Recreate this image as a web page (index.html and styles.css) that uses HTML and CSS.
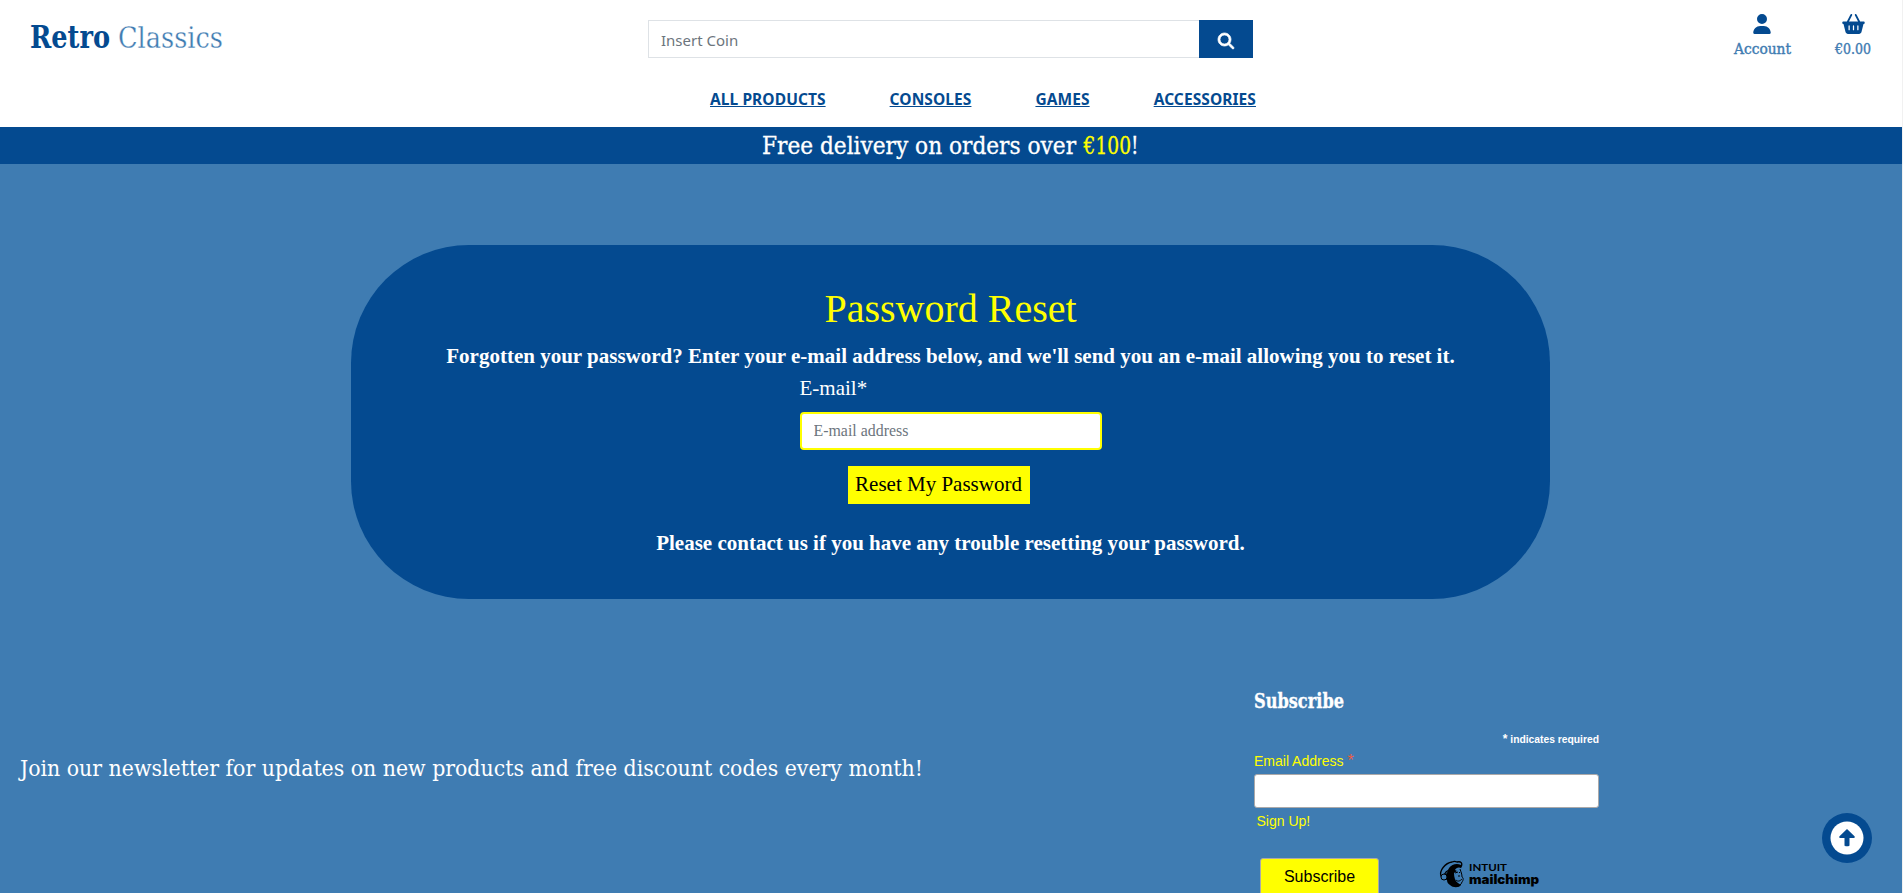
FILE: index.html
```html
<!DOCTYPE html>
<html lang="en">
<head>
<meta charset="utf-8">
<title>Retro Classics</title>
<link rel="stylesheet" href="styles.css">
</head>
<body>
<header class="header">
  <div class="top">
    <a class="logo slab"><svg width="200" height="40"><text class="logo-a" x="0" y="29" textLength="80" lengthAdjust="spacingAndGlyphs">Retro</text><text class="logo-b" x="88" y="29" textLength="105" lengthAdjust="spacingAndGlyphs">Classics</text></svg></a>
    <form class="search">
      <input class="search-input" type="text" placeholder="Insert Coin">
      <button class="search-btn" type="button" aria-label="Search"><svg width="16" height="16" viewBox="0 0 512 512" fill="#fff" stroke="#fff" stroke-width="24"><path d="M416 208c0 45.900-14.900 88.300-40 122.700L502.600 457.400c12.500 12.500 12.500 32.800 0 45.300s-32.800 12.500-45.300 0L330.700 376c-34.400 25.200-76.800 40-122.700 40C93.100 416 0 322.900 0 208S93.100 0 208 0S416 93.100 416 208zM208 352a144 144 0 1 0 0-288 144 144 0 1 0 0 288z"/></svg></button>
    </form>
    <div class="tools">
      <a class="tool"><svg width="18" height="20" viewBox="0 0 448 512"><path d="M224 256A128 128 0 1 0 224 0a128 128 0 1 0 0 256zm-45.700 48C79.800 304 0 383.800 0 482.300C0 498.700 13.300 512 29.700 512H418.300c16.400 0 29.700-13.300 29.700-29.700C448 383.800 368.200 304 269.700 304H178.300z"/></svg>
        <svg class="slab" width="58" height="20"><text x="1" y="15" textLength="57" lengthAdjust="spacingAndGlyphs">Account</text></svg></a>
      <a class="tool"><svg width="23" height="20" viewBox="0 0 576 512"><path d="M253.300 35.100c6.100-11.800 1.500-26.300-10.200-32.400s-26.300-1.500-32.400 10.200L117.600 192H32c-17.700 0-32 14.300-32 32s14.300 32 32 32L83.900 463.500C91 492 116.600 512 146 512H430c29.400 0 55-20 62.100-48.500L544 256c17.700 0 32-14.300 32-32s-14.300-32-32-32H458.400L365.300 12.900C359.200 1.200 344.700-3.400 332.900 2.700s-16.300 20.600-10.200 32.400L404.300 192H171.700L253.300 35.100zM192 304v96c0 8.800-7.200 16-16 16s-16-7.200-16-16V304c0-8.800 7.200-16 16-16s16 7.200 16 16zm96-16c8.800 0 16 7.200 16 16v96c0 8.800-7.200 16-16 16s-16-7.200-16-16V304c0-8.800 7.200-16 16-16zm128 16v96c0 8.800-7.200 16-16 16s-16-7.200-16-16V304c0-8.800 7.200-16 16-16s16 7.200 16 16z"/></svg>
        <svg class="slab" width="36" height="20"><text x="0" y="15" textLength="36" lengthAdjust="spacingAndGlyphs">€0.00</text></svg></a>
    </div>
  </div>
  <nav class="nav"><a>ALL PRODUCTS</a><a>CONSOLES</a><a>GAMES</a><a>ACCESSORIES</a></nav>
</header>
<div class="banner slab"><svg width="378" height="36"><text x="0" y="27" textLength="314" lengthAdjust="spacingAndGlyphs">Free delivery on orders over</text><text x="321.500" y="27" textLength="55" lengthAdjust="spacingAndGlyphs"><tspan class="price">€100</tspan>!</text></svg></div>
<main class="main">
  <section class="card">
    <h1 class="title">Password Reset</h1>
    <p class="lead">Forgotten your password? Enter your e-mail address below, and we'll send you an e-mail allowing you to reset it.</p>
    <form class="reset">
      <label class="label" for="email">E-mail*</label>
      <input class="email" id="email" type="email" placeholder="E-mail address">
      <button class="reset-btn" type="button">Reset My Password</button>
    </form>
    <p class="lead">Please contact us if you have any trouble resetting your password.</p>
  </section>
</main>
<footer class="footer">
  <p class="join slab"><svg width="904" height="34"><text x="0" y="24" textLength="903" lengthAdjust="spacingAndGlyphs">Join our newsletter for updates on new products and free discount codes every month!</text></svg></p>
  <form class="subscribe">
    <h2 class="sub-title slab"><svg width="92" height="28"><text x="0" y="21" textLength="90" lengthAdjust="spacingAndGlyphs">Subscribe</text></svg></h2>
    <div class="required"><span class="required-star">*</span> indicates required</div>
    <label class="sub-label" for="mc">Email Address <span class="star">*</span></label>
    <input class="sub-input" id="mc" type="email">
    <span class="signup">Sign Up!</span>
    <div class="sub-row">
      <button class="sub-btn" type="button">Subscribe</button>
      <svg class="chimp" width="102" height="30" viewBox="0 0 102 30">
        <path d="M2 16C0 11 6 3 13 2c2-1 3-1 5 0 4-1 6 1 4 5-5-2-9-1-12 3-3 1-4 3-5 5z" fill="none" stroke="#000" stroke-width="1.300"/>
        <path d="M10 8c3-4 8-5 12-3v3c-3-1-5 0-6 2l2 1-3 2c0 4 1 8 4 10l3 2c-2 3-8 3-11 0-2-1-3-3-3-5-3-1-3-4-1-6 2-2 2-4 3-6z"/>
        <path d="M16 13l3-1M20 12l1 1M21 9c1 3 2 5 2 8 2 1 1 4 0 5-1 3-3 4-5 4M17 20c2 2 4 1 6-1M20 15v2" fill="none" stroke="#000" stroke-width="1"/>
        <circle cx="5" cy="17" r="3" fill="#3f7cb2" stroke="#000"/>
        <text class="intuit" x="30" y="11" textLength="38" lengthAdjust="spacingAndGlyphs">INTUIT</text>
        <text class="mailchimp" x="30" y="24" textLength="70" lengthAdjust="spacingAndGlyphs">mailchimp</text>
      </svg>
    </div>
  </form>
</footer>
<a class="to-top" aria-label="Back to top"><svg width="34" height="34" viewBox="0 0 34 34"><circle cx="17" cy="17" r="16.500" fill="#fff"/><path d="M17 8l7.500 7.300c.8.900.2 1.700-.8 1.700h-4.200v7c0 .8-.5 1.200-1.200 1.200h-2.600c-.7 0-1.200-.4-1.200-1.200v-7h-4.200c-1 0-1.600-.8-.8-1.700z" fill="#044a90"/></svg></a>
<div class="edge"></div>
</body>
</html>
```
FILE: styles.css
```css
* { box-sizing: border-box; }
body { margin: 0; height: 893px; overflow: hidden; background: #3f7cb2; font-family: "Liberation Serif", serif; }
svg { display: block; overflow: visible; }
h1, h2, p { margin: 0; font-weight: 400; }
.slab { font-family: "DejaVu Serif Condensed", "DejaVu Serif", serif; }

.header { height: 127px; background: #fff; }
.top { display: grid; grid-template-columns: 648px 605px 1fr; height: 78px; align-items: start; }
.logo { padding: 19px 0 0 30px; }
.logo-a { font-size: 31px; font-weight: 700; fill: #044a90; }
.logo-b { font-size: 30px; fill: #3f7cb2; stroke: #fff; stroke-width: .3px; }
.search { display: flex; margin-top: 20px; }
.search-input { width: 551px; height: 38px; padding: 2px 12px 0; border: 1px solid #dee2e6; border-right: 0; font: 15px "Noto Sans", sans-serif; outline: none; }
.search-input::placeholder, .email::placeholder { color: #6c757d; opacity: 1; }
.search-btn { display: flex; flex: 1; align-items: center; justify-content: center; padding: 3px 0 0; border: 0; background: #044a90; }
.tools { display: flex; justify-content: flex-end; gap: 44px; padding: 14px 32px 0 0; }
.tool { display: flex; flex-direction: column; align-items: center; gap: 5px; fill: #044a90; }
.tool .slab { fill: #3f7cb2; stroke: #3f7cb2; stroke-width: .4px; font-size: 15px; }
.nav { display: flex; gap: 64px; padding: 9px 0 0 710px; font: 700 15.5px/24px "Noto Sans", sans-serif; color: #044a90; }
.nav a { text-decoration: underline; letter-spacing: .08px; }
.banner { display: flex; justify-content: center; height: 37px; padding-right: 2px; background: #044a90; font-size: 24px; fill: #fff; stroke: #fff; stroke-width: .3px; }
.price { fill: #ff0; stroke: #ff0; }

.main { display: flex; justify-content: center; padding: 81px 2px 0 0; }
.card { width: 1199px; height: 354px; padding-top: 40px; border-radius: 118px; background: #044a90; color: #fff; text-align: center; }
.title { font-size: 40px; line-height: 48px; color: #ff0; }
.lead { margin-top: 11px; font-size: 21px; font-weight: 700; line-height: 24px; }
.reset { display: flex; flex-direction: column; align-items: flex-start; width: 302px; margin: 5px auto 27px; }
.label { font-size: 21px; line-height: 30px; }
.email { width: 302px; height: 38px; margin: 9px 0 16px; padding: 0 12px; border: 2px solid #ff0; border-radius: 4px; font: 15.9px "Liberation Serif", serif; outline: none; }
.reset-btn { width: 182px; height: 38px; margin-left: 48px; padding: 0 0 2px; border: 0; background: #ff0; color: #000; font: 21px "Liberation Serif", serif; white-space: nowrap; }

.footer { display: grid; grid-template-columns: 1254px 345px; height: 294px; font-family: "Liberation Sans", sans-serif; }
.join { padding: 153px 0 0 20px; font-size: 23px; fill: #fff; }
.subscribe { display: flex; flex-direction: column; padding-top: 88px; color: #ff0; font-size: 14px; }
.sub-title { font-size: 20px; font-weight: 700; fill: #fff; stroke: #fff; stroke-width: .3px; }
.required { margin-top: 18px; text-align: right; color: #fff; font-size: 10.3px; font-weight: 700; line-height: 13px; }
.required-star { font-size: 12px; line-height: 1; }
.sub-label { margin-top: 7px; line-height: 17px; }
.star { color: #e85c41; font-size: 16px; line-height: 1; }
.sub-input { height: 34px; margin-top: 4px; border: 1px solid #aba9a9; border-radius: 3px; }
.signup { margin: 5px 0 0 2.5px; line-height: 17px; }
.sub-row { display: flex; align-items: flex-start; gap: 60px; margin: 28px 0 0 6px; }
.sub-btn { width: 119px; height: 42px; padding: 0 0 5px; border: 1px solid #aba9a9; border-radius: 3px; background: #ff0; color: #000; font: 16px "Liberation Sans", sans-serif; }
.chimp { margin-top: 2px; }
.intuit { font: 700 10px Lato, sans-serif; }
.mailchimp { font: 900 12.5px Inter, sans-serif; }

.to-top { position: fixed; left: 1822px; top: 813px; display: flex; align-items: center; justify-content: center; width: 50px; height: 50px; border-radius: 50%; background: #044a90; }
.edge { position: fixed; top: 0; right: 0; width: 1px; height: 893px; background: #f1f1f1; }
```
